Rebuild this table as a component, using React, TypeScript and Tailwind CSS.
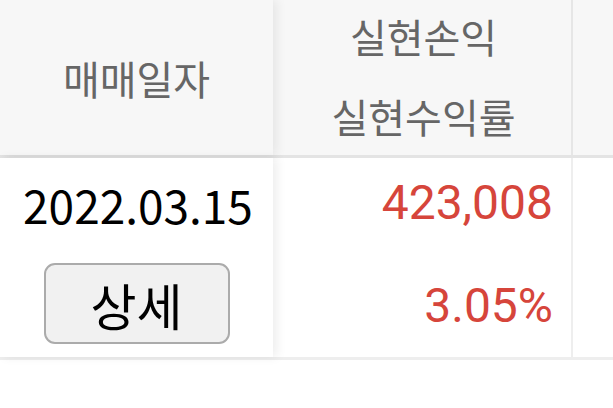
import React from "react";

export default function App() {
  return (
    <div className="w-[613px] h-[408px] bg-white overflow-hidden" style={{ fontFamily: '"Noto Sans CJK KR", "Noto Sans", sans-serif' }}>
      {/* header */}
      <div className="flex h-[158px] border-b-[3px] border-[#e4e4e4] bg-[#f7f7f7]">
        <div className="relative z-10 w-[273px] shrink-0 flex items-center justify-center bg-[#f7f7f7] shadow-[4px_0_10px_rgba(0,0,0,0.07)]">
          <span className="text-[40px] leading-none text-[#666666]">매매일자</span>
        </div>
        <div className="w-[300px] shrink-0 flex flex-col items-center justify-center gap-[40px] border-r-2 border-[#e6e6e6] pl-[3px] pb-[4px]">
          <span className="text-[40px] leading-none text-[#666666]">실현손익</span>
          <span className="text-[40px] leading-none text-[#666666]">실현수익률</span>
        </div>
        <div className="flex-1" />
      </div>
      {/* row */}
      <div className="flex h-[202px] border-b-[3px] border-[#eeeeee] bg-white">
        <div className="relative z-10 w-[273px] shrink-0 flex flex-col items-center bg-white shadow-[4px_0_10px_rgba(0,0,0,0.07)]">
          <span className="mt-[16px] ml-[3px] text-[46px] leading-[60px] text-black">2022.03.15</span>
          <button className="mt-[29px] w-[186px] h-[81px] rounded-[11px] border-2 border-[#ababab] bg-[#f1f1f1] flex items-center justify-center">
            <span className="text-[50px] leading-none text-black">상세</span>
          </button>
        </div>
        <div className="w-[300px] shrink-0 flex flex-col items-end border-r-2 border-[#eeeeee] pr-[18px]" style={{ fontFamily: 'Roboto, "Noto Sans CJK KR", sans-serif' }}>
          <span className="mt-[15px] text-[48px] leading-[60px] text-[#d6453b]">423,008</span>
          <span className="mt-[43px] text-[48px] leading-[60px] text-[#d6453b]">3.05%</span>
        </div>
        <div className="flex-1" />
      </div>
    </div>
  );
}
